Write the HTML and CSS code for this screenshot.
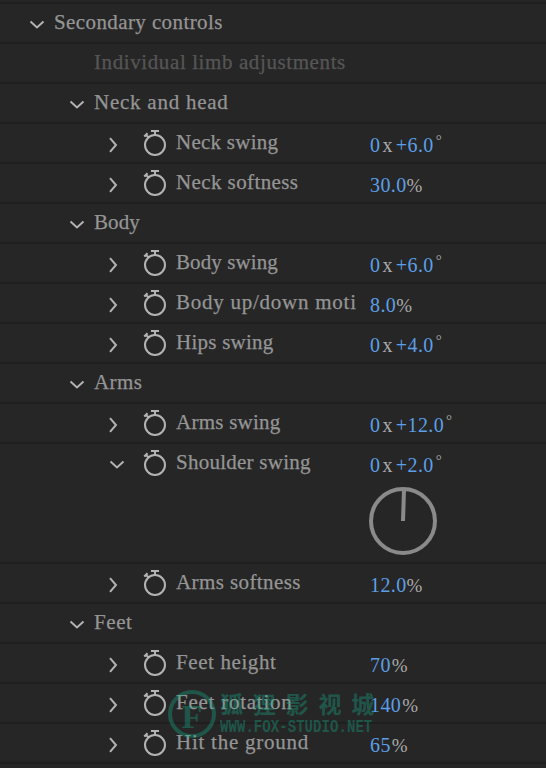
FILE: index.html
```
<!DOCTYPE html>
<html lang="en">
<head>
  <meta charset="UTF-8">
  <meta name="viewport" content="width=device-width, initial-scale=1.0">
  <title>Secondary controls</title>
  <link rel="stylesheet" href="styles.css">
</head>
<body>

<svg class="symbols" width="0" height="0">
  <symbol id="open" viewBox="0 0 16 10">
    <path d="M1.5 1.5 L8 7.5 L14.5 1.5"/>
  </symbol>
  <symbol id="closed" viewBox="0 0 10 16">
    <path d="M2 1.2 L8 8 L2 14.8"/>
  </symbol>
  <symbol id="watch" viewBox="0 0 24 28">
    <circle cx="12" cy="16" r="10"/>
    <path d="M8 2 H16 M12 2 V6 M3 6 L5.8 8.6 M1.2 7.4 L4.6 4.2"/>
  </symbol>
</svg>

<div class="panel">
  <div class="row group top">
    <svg class="arrow open"><use href="#open"/></svg>
    <span class="label">Secondary controls</span>
  </div>
  <div class="row note">
    <span class="label wide">Individual limb adjustments</span>
  </div>

  <div class="row group">
    <svg class="arrow open"><use href="#open"/></svg>
    <span class="label wider">Neck and head</span>
  </div>
  <div class="row prop">
    <span class="twirl"><svg class="arrow closed"><use href="#closed"/></svg></span>
    <svg class="watch"><use href="#watch"/></svg>
    <span class="label snug">Neck swing</span>
    <span class="value">0<i>x</i>+6.0<sup>°</sup></span>
  </div>
  <div class="row prop">
    <span class="twirl"><svg class="arrow closed"><use href="#closed"/></svg></span>
    <svg class="watch"><use href="#watch"/></svg>
    <span class="label">Neck softness</span>
    <span class="value">30.0<b>%</b></span>
  </div>

  <div class="row group">
    <svg class="arrow open"><use href="#open"/></svg>
    <span class="label tight">Body</span>
  </div>
  <div class="row prop">
    <span class="twirl"><svg class="arrow closed"><use href="#closed"/></svg></span>
    <svg class="watch"><use href="#watch"/></svg>
    <span class="label tight">Body swing</span>
    <span class="value">0<i>x</i>+6.0<sup>°</sup></span>
  </div>
  <div class="row prop">
    <span class="twirl"><svg class="arrow closed"><use href="#closed"/></svg></span>
    <svg class="watch"><use href="#watch"/></svg>
    <span class="label wider">Body up/down moti</span>
    <span class="value">8.0<b>%</b></span>
  </div>
  <div class="row prop">
    <span class="twirl"><svg class="arrow closed"><use href="#closed"/></svg></span>
    <svg class="watch"><use href="#watch"/></svg>
    <span class="label snug">Hips swing</span>
    <span class="value">0<i>x</i>+4.0<sup>°</sup></span>
  </div>

  <div class="row group">
    <svg class="arrow open"><use href="#open"/></svg>
    <span class="label">Arms</span>
  </div>
  <div class="row prop">
    <span class="twirl"><svg class="arrow closed"><use href="#closed"/></svg></span>
    <svg class="watch"><use href="#watch"/></svg>
    <span class="label snug">Arms swing</span>
    <span class="value">0<i>x</i>+12.0<sup>°</sup></span>
  </div>
  <div class="row prop expanded">
    <span class="twirl"><svg class="arrow open"><use href="#open"/></svg></span>
    <svg class="watch"><use href="#watch"/></svg>
    <span class="label snug">Shoulder swing</span>
    <span class="value">0<i>x</i>+2.0<sup>°</sup></span>
    <svg class="dial" viewBox="0 0 68 68">
      <circle cx="34" cy="34" r="32"/>
      <path d="M34 34 L35 3"/>
    </svg>
  </div>
  <div class="row prop">
    <span class="twirl"><svg class="arrow closed"><use href="#closed"/></svg></span>
    <svg class="watch"><use href="#watch"/></svg>
    <span class="label">Arms softness</span>
    <span class="value">12.0<b>%</b></span>
  </div>

  <div class="row group">
    <svg class="arrow open"><use href="#open"/></svg>
    <span class="label wide">Feet</span>
  </div>
  <div class="row prop">
    <span class="twirl"><svg class="arrow closed"><use href="#closed"/></svg></span>
    <svg class="watch"><use href="#watch"/></svg>
    <span class="label wide">Feet height</span>
    <span class="value whole">70<b>%</b></span>
  </div>
  <div class="row prop">
    <span class="twirl"><svg class="arrow closed"><use href="#closed"/></svg></span>
    <svg class="watch"><use href="#watch"/></svg>
    <span class="label wider">Feet rotation</span>
    <span class="value whole">140<b>%</b></span>
  </div>
  <div class="row prop">
    <span class="twirl"><svg class="arrow closed"><use href="#closed"/></svg></span>
    <svg class="watch"><use href="#watch"/></svg>
    <span class="label wider">Hit the ground</span>
    <span class="value whole">65<b>%</b></span>
  </div>
</div>

<div class="watermark">
  <div class="badge">F</div>
  <div>
    <div class="studio" lang="zh">狐狸影视城</div>
    <div class="site">WWW.FOX-STUDIO.NET</div>
  </div>
</div>

</body>
</html>
```

FILE: styles.css
```
body {
  margin: 0;
  height: 768px;
  overflow: hidden;
  position: relative;
  background-color: #262626;
  color: #959595;
  font-family: "Liberation Serif", serif;
}

.symbols {
  position: absolute;
}

.panel {
  padding-top: 2px;
  height: 760px;
  border-bottom: 2px solid #1f1f1f;
}

.row {
  display: flex;
  align-items: flex-start;
  box-sizing: border-box;
  height: 40px;
  border-top: 2px solid #1f1f1f;
}

.group {
  padding-left: 69px;
}

.top {
  padding-left: 29px;
}

.note {
  padding-left: 94px;
  color: #565656;
}

.prop {
  display: grid;
  grid-template-columns: 35px 33px 194px 1fr;
  grid-template-rows: 38px;
  padding-left: 108px;
}

.expanded {
  height: 120px;
  grid-template-rows: 38px 1fr;
}

/* icons */

symbol {
  fill: none;
  stroke: #b4b4b4;
  stroke-width: 2;
}

.arrow.open {
  width: 16px;
  height: 10px;
  margin: 16px 9px 0 0;
}

.arrow.closed {
  display: block;
  width: 10px;
  height: 16px;
  margin-top: 13px;
}

.twirl .arrow.open {
  display: block;
  margin-left: 1px;
}

.watch {
  width: 24px;
  height: 28px;
  margin-top: 5px;
}

.dial {
  grid-column: 4;
  width: 68px;
  height: 68px;
  margin: 5px 0 0 -1px;
  fill: none;
  stroke: #8a8a8a;
  stroke-width: 4;
}

/* text */

.label {
  font-size: 21px;
  line-height: 24px;
  letter-spacing: 0.4px;
  margin-top: 6px;
  white-space: nowrap;
  -webkit-text-stroke: 0.25px currentColor;
}

.tight {
  letter-spacing: 0.1px;
}

.snug {
  letter-spacing: 0.25px;
}

.wide {
  letter-spacing: 0.6px;
}

.wider {
  letter-spacing: 0.75px;
}

.value {
  font-size: 20px;
  line-height: 24px;
  letter-spacing: 0.4px;
  margin-top: 9px;
  color: #5c9fe6;
  white-space: nowrap;
}

.value i,
.value b,
.value sup {
  color: #aaa;
  font-style: normal;
  font-weight: normal;
}

.value i {
  margin: 0 3px 0 2px;
}

.value b {
  font-size: 19px;
}

.whole b {
  margin-left: 1px;
}

.value sup {
  margin-left: 2px;
  font-size: 15px;
  line-height: 0;
  vertical-align: 7px;
}

/* watermark */

.watermark {
  position: absolute;
  left: 168px;
  top: 690px;
  display: flex;
  color: #15af8d;
  font-weight: bold;
  white-space: nowrap;
  opacity: 0.35;
}

.badge {
  box-sizing: border-box;
  width: 48px;
  height: 48px;
  margin-right: 4px;
  border: 4px solid #15af8d;
  border-radius: 50%;
  font-size: 34px;
  line-height: 46px;
  text-align: center;
}

.studio {
  font-family: "Noto Sans CJK SC", sans-serif;
  font-size: 23px;
  line-height: 27px;
  letter-spacing: 9.8px;
}

.site {
  font-family: "Liberation Mono", monospace;
  font-size: 14px;
  line-height: 20px;
  letter-spacing: 0.06px;
  transform: scaleY(1.25);
}
```
